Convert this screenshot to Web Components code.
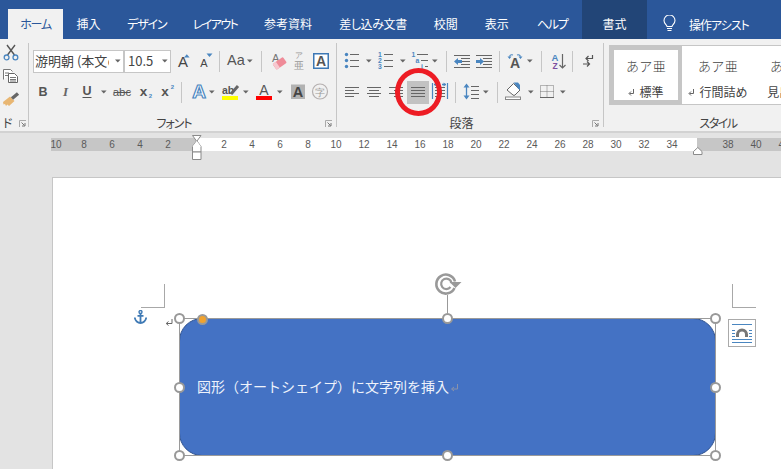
<!DOCTYPE html>
<html lang="ja"><head><meta charset="utf-8"><title>Word</title>
<style>
html,body{margin:0;padding:0;height:100%;overflow:hidden;background:#e3e3e3}
body{font-family:"Noto Sans CJK JP","Noto Sans",sans-serif}
</style></head><body>
<word-app>
  <word-tabs>
    <word-tab w="55" active left="8" ls="-1.2">ホーム</word-tab>
    <word-tab w="51">挿入</word-tab>
    <word-tab w="65.5" ls="-1.2">デザイン</word-tab>
    <word-tab w="71" ls="-1.6">レイアウト</word-tab>
    <word-tab w="75">参考資料</word-tab>
    <word-tab w="95" ls="-.4">差し込み文書</word-tab>
    <word-tab w="50.5">校閲</word-tab>
    <word-tab w="51.5">表示</word-tab>
    <word-tab w="59.5" ls="-1.2">ヘルプ</word-tab>
    <word-tab w="65" dark>書式</word-tab>
    <word-assist>操作アシスト</word-assist>
  </word-tabs>
  <word-ribbon>
    <ribbon-group w="28" label="ド" start launcher style="--pad:5px;--gap:3px">
      <rb-row h="20"><rb-icon n="scissors" w="16" h="20" m="-1"></rb-icon></rb-row>
      <rb-row h="20"><rb-icon n="copy" w="16" h="20" m="-1"></rb-icon></rb-row>
      <rb-row h="20"><rb-icon n="brush" w="16" h="20" m="-1"></rb-icon></rb-row>
    </ribbon-group>
    <rb-sep></rb-sep>
    <ribbon-group w="307" label="フォント" launcher style="--ls:-1px">
      <rb-row>
        <rb-combo w="91" tw="74" pad="1" cm="6">游明朝 (本文の</rb-combo>
        <rb-combo w="47" tw="31" pad="3" cm="3">10.5</rb-combo>
        <rb-icon n="grow" w="19" m="4"></rb-icon>
        <rb-icon n="shrink" w="18" m="2"></rb-icon>
        <rb-icon n="vs" w="1" m="5"></rb-icon>
        <rb-icon n="case" w="29" m="5"></rb-icon>
        <rb-icon n="vs" w="1" m="7"></rb-icon>
        <rb-icon n="eraser" w="22" m="5"></rb-icon>
        <rb-icon n="ruby" w="14" m="3"></rb-icon>
        <rb-icon n="boxa" w="18" m="6"></rb-icon>
      </rb-row>
      <rb-row>
        <rb-icon n="bold" w="16" m="2"></rb-icon>
        <rb-icon n="italic" w="15" m="7"></rb-icon>
        <rb-icon n="under" w="16" m="6"></rb-icon>
        <rb-icon n="caret" w="6" m="6"></rb-icon>
        <rb-icon n="strike" w="20" m="5"></rb-icon>
        <rb-icon n="sub" w="19" m="4"></rb-icon>
        <rb-icon n="sup" w="19" m="2"></rb-icon>
        <rb-icon n="vs" w="1" m="5"></rb-icon>
        <rb-icon n="glow" w="18" m="8"></rb-icon>
        <rb-icon n="caret" w="6" m="1"></rb-icon>
        <rb-icon n="mark" w="20" m="5"></rb-icon>
        <rb-icon n="caret" w="6" m="3"></rb-icon>
        <rb-icon n="red" w="20" m="5"></rb-icon>
        <rb-icon n="caret" w="6" m="3"></rb-icon>
        <rb-icon n="shade" w="16" m="7"></rb-icon>
        <rb-icon n="enclose" w="18" m="5"></rb-icon>
      </rb-row>
    </ribbon-group>
    <rb-sep></rb-sep>
    <ribbon-group w="266" label="段落" launcher>
      <rb-row>
        <rb-icon n="bullets" w="16" m="3"></rb-icon>
        <rb-icon n="caret" w="6" m="6"></rb-icon>
        <rb-icon n="numbers" w="17" m="5"></rb-icon>
        <rb-icon n="caret" w="6" m="6"></rb-icon>
        <rb-icon n="multi" w="17" m="5"></rb-icon>
        <rb-icon n="caret" w="6" m="4"></rb-icon>
        <rb-icon n="vs" w="1" m="8"></rb-icon>
        <rb-icon n="outdent" w="16" m="7"></rb-icon>
        <rb-icon n="indent" w="16" m="6"></rb-icon>
        <rb-icon n="vs" w="1" m="7"></rb-icon>
        <rb-icon n="direction" w="16" m="7"></rb-icon>
        <rb-icon n="caret" w="6" m="4"></rb-icon>
        <rb-icon n="vs" w="1" m="8"></rb-icon>
        <rb-icon n="sort" w="15" m="9"></rb-icon>
        <rb-icon n="vs" w="1" m="6"></rb-icon>
        <rb-icon n="pilcrow" w="10" m="10"></rb-icon>
      </rb-row>
      <rb-row>
        <rb-icon n="aleft" w="14" m="4"></rb-icon>
        <rb-icon n="acenter" w="14" m="8"></rb-icon>
        <rb-icon n="aright" w="14" m="8"></rb-icon>
        <rb-icon n="ajust" w="22" m="4"></rb-icon>
        <rb-icon n="adist" w="18" m="2"></rb-icon>
        <rb-icon n="vs" w="1" m="6"></rb-icon>
        <rb-icon n="spacing" w="15" m="8"></rb-icon>
        <rb-icon n="caret" w="6" m="4"></rb-icon>
        <rb-icon n="vs" w="1" m="8"></rb-icon>
        <rb-icon n="bucket" w="17" m="7"></rb-icon>
        <rb-icon n="caret" w="6" m="6"></rb-icon>
        <rb-icon n="borders" w="14" m="6"></rb-icon>
        <rb-icon n="caret" w="6" m="6"></rb-icon>
      </rb-row>
    </ribbon-group>
    <rb-sep></rb-sep>
    <ribbon-group w="245" label="スタイル" launcher style="--pad:6px;--ls:-1.5px">
      <style-gallery>
        <style-item selected label="標準" mark>あア亜</style-item>
        <style-item label="行間詰め" mark>あア亜</style-item>
        <style-item label="見出し 1">あア亜</style-item>
      </style-gallery>
    </ribbon-group>
  </word-ribbon>
  <word-canvas>
    <word-ruler></word-ruler>
    <doc-page>
      <crop-mark side="left"></crop-mark>
      <crop-mark side="right"></crop-mark>
      <anchor-mark></anchor-mark>
      <wp-shape>図形（オートシェイプ）に文字列を挿入</wp-shape>
      <layout-button></layout-button>
    </doc-page>
  </word-canvas>
  <red-ring></red-ring>
</word-app>
<script>
const G='#666',BL='#4a86c0';
const FONT='"Noto Sans CJK JP","Noto Sans",sans-serif';
const T=(x,y,s,size,o='')=>`<text x="${x}" y="${y}" font-size="${size}" ${o}>${s}</text>`;
const mid='text-anchor="middle"';
const hl=(x1,x2,y,c=G)=>`<path d="M${x1} ${y}H${x2}" stroke="${c}" fill="none"/>`;
const lines=(arr)=>arr.map(a=>hl(a[0],a[1],a[2])).join('');
const ICONS={
 vs:h=>`<path d="M.5 2V23" stroke="#c6c6c6"/>`,
 caret:()=>`<path d="M0 10.5h5.6l-2.8 3z" fill="${G}"/>`,
 scissors:()=>`<path d="M4 1l7.5 10M12 1L4.5 11" stroke="#555" stroke-width="1.4" fill="none"/><circle cx="3.6" cy="13.4" r="2.4" fill="none" stroke="${BL}" stroke-width="1.3"/><circle cx="12.4" cy="13.4" r="2.4" fill="none" stroke="${BL}" stroke-width="1.3"/>`,
 copy:()=>`<path d="M.5 12.5V2.5h7l2 2" fill="#fff" stroke="#777"/><path d="M2 6h4M2 8.500h3" stroke="#777"/><path d="M5.500 6.500h6l3 3v6h-9z" fill="#fff" stroke="#666"/><path d="M7 10.500h6M7 12.500h6M7 14h6" stroke="#777"/>`,
 brush:()=>`<path d="M0 12L7 6.500l4.500 4.500L6 16l-1.500-1.500L3 16l-1-2-1.500.5z" fill="#e8b672"/><path d="M9 8.500l6-5" stroke="#666" stroke-width="3.400"/>`,
 grow:()=>T(8,18,'A',15,`${mid} fill="#444"`)+`<path d="M9 8.5l2.8-3.2 2.8 3.2z" fill="${BL}"/>`,
 shrink:()=>T(8,18,'A',11,`${mid} fill="#444"`)+`<path d="M10.5 4.5h6l-3 3.4z" fill="${BL}"/>`,
 case:()=>T(2,16,'Aa',14.5,`fill="#555"`)+`<path d="M22 10.5h5.6l-2.8 3z" fill="${G}"/>`,
 eraser:()=>T(5,13,'A',11,`fill="#777"`)+`<g transform="rotate(-35 12.5 14.5)"><rect x="6.5" y="11" width="12.5" height="7" rx="1" fill="#ef8b98"/><rect x="6.5" y="11" width="4" height="7" fill="#f7c8cf"/></g>`,
 ruby:()=>T(7,9,'ア',7.5,`${mid} fill="#999" font-family='${FONT}'`)+T(7,20,'亜',10,`${mid} fill="#999" font-family='${FONT}'`),
 boxa:()=>`<rect x="1.75" y="4.75" width="14.5" height="14.5" fill="#fff" stroke="#3d78b5" stroke-width="1.5"/>`+T(9,17,'A',14,`${mid} font-weight="bold" fill="#555"`),
 bold:()=>T(8,16,'B',12.5,`${mid} font-weight="bold" fill="#555"`),
 italic:()=>T(7.5,16,'I',13,`${mid} font-style="italic" font-weight="bold" fill="#666" style="font-family:'Liberation Serif'"`),
 under:()=>T(8,15,'U',12.5,`${mid} font-weight="bold" fill="#555"`)+`<path d="M3.5 17.5h9" stroke="#555"/>`,
 strike:()=>T(10,15.5,'abc',11.5,`${mid} fill="#555"`)+`<path d="M1.5 12.5h17" stroke="#555"/>`,
 sub:()=>T(7.5,16,'x',13.5,`${mid} font-weight="bold" fill="#555"`)+T(14.5,18,'2',6,`${mid} font-weight="bold" fill="${BL}"`),
 sup:()=>T(8,16,'x',13.5,`${mid} font-weight="bold" fill="#555"`)+T(15.5,9,'2',6,`${mid} font-weight="bold" fill="${BL}"`),
 glow:()=>T(9,18,'A',19,`${mid} font-weight="bold" fill="#fff" stroke="${BL}" stroke-width="1.2"`),
 mark:()=>T(2,14,'ab',10.5,`fill="#555" font-weight="bold"`)+`<path d="M18 6l-7 8" stroke="#666" stroke-width="3"/><rect x="2" y="16" width="16" height="4" fill="#ffff00"/>`,
 red:()=>T(10,15,'A',14,`${mid} fill="#555"`)+`<rect x="2" y="16" width="16" height="4" fill="#ff0000"/>`,
 shade:()=>`<rect x="1" y="4.5" width="14" height="14.5" fill="#b2b2b2"/>`+T(8,17,'A',14.5,`${mid} font-weight="bold" fill="#444"`),
 enclose:()=>`<circle cx="9" cy="11.5" r="7.5" fill="none" stroke="#b5b0b0" stroke-width="1.2"/>`+T(9,15.5,'字',10,`${mid} fill="#999" font-family='${FONT}'`),
 bullets:()=>[5.5,11.5,17.5].map(y=>`<circle cx="2.5" cy="${y}" r="1.7" fill="${BL}"/>`+hl(6,15,y)).join(''),
 numbers:()=>[['1',5.5],['2',11.5],['3',17.5]].map(a=>T(3,a[1]+2.3,a[0],6.8,`${mid} font-weight="bold" fill="${BL}"`)+hl(7,16,a[1])).join(''),
 multi:()=>T(2.5,7.8,'1',6.8,`${mid} font-weight="bold" fill="${BL}"`)+hl(6,17,5.5)+T(6.5,13.8,'a',6.8,`${mid} font-weight="bold" fill="${BL}"`)+hl(10,17,11.5)+T(11,19.8,'i',6.8,`${mid} font-weight="bold" fill="${BL}"`)+hl(14,17,17.5),
 outdent:()=>lines([[0,16,6.5],[7,16,9.5],[7,16,12.5],[7,16,15.5],[0,16,18.5]])+`<path d="M0 12.5l4-3.6v2h4v3.2H4v2z" fill="${BL}"/>`,
 indent:()=>lines([[0,16,6.5],[7,16,9.5],[7,16,12.5],[7,16,15.5],[0,16,18.5]])+`<path d="M8 12.5L4 8.9v2H0v3.2h4v2z" fill="${BL}"/>`,
 direction:()=>T(8,19,'A',14,`${mid} font-weight="bold" fill="#555"`)+`<path d="M6 6C4.500 5.500 3 6 2.500 7.500M10 6c1.500-.5 3 0 3.500 1.500" fill="none" stroke="${BL}" stroke-width="1.1"/><path d="M.5 7.500h4L2.500 10zM15.500 7.500h-4l2 2.500z" fill="${BL}"/>`,
 sort:()=>T(4,12,'A',9.5,`${mid} font-weight="bold" fill="${BL}"`)+T(4,20,'Z',8.5,`${mid} font-weight="bold" fill="#7b4fa0"`)+`<path d="M11.5 5v14M8.5 16l3 3 3-3" fill="none" stroke="#666" stroke-width="1.2"/>`,
 pilcrow:()=>`<path d="M9.5 6v3.5H3M5.5 7L3 9.5 5.5 12" fill="none" stroke="#555" stroke-width="1.2"/><path d="M0 15h6M4 12.5L6.5 15 4 17.5" fill="none" stroke="#555" stroke-width="1.2"/>`,
 aleft:()=>lines([[0,14,7.5],[0,9,10.5],[0,14,13.5],[0,9,16.5]]),
 acenter:()=>lines([[0,14,7.5],[2,12,10.5],[0,14,13.5],[2,12,16.5]]),
 aright:()=>lines([[0,14,7.5],[5,14,10.5],[0,14,13.5],[5,14,16.5]]),
 ajust:()=>`<rect x="0" y="1" width="22" height="23" fill="#c2c2c2"/>`+lines([[4,18,7.5],[4,18,10.5],[4,18,13.5],[4,18,16.5]]),
 adist:()=>`<path d="M1.5 3v16M16.5 3v16" stroke="${BL}" stroke-width="1.2"/>`+lines([[4,14,7.5],[4,14,10.5],[4,14,13.5],[4,14,16.5]])+`<path d="M3 4.5h4M15 4.5h-4" stroke="${BL}" stroke-width="1.3"/><path d="M3 4.5l2.4-2v4zM15 4.5l-2.4-2v4z" fill="${BL}"/>`,
 spacing:()=>`<path d="M2.5 5v13" stroke="${BL}" stroke-width="1.3"/><path d="M2.5 3.5L5.5 7.5h-6zM2.5 19.5l3-4h-6z" fill="${BL}"/>`+lines([[7,15,6.5],[7,15,10.5],[7,15,14.5],[7,15,18.5]]),
 bucket:()=>`<path d="M2 10l6.500-6.500L15 10l-5 5a1.500 1.500 0 0 1-2 0z" fill="#fff" stroke="#666"/><path d="M8.500 2.500h4.500l2 2.500v5l-2-1.500-2-3z" fill="${BL}"/><rect x=".5" y="17" width="15" height="2.500" fill="#fff" stroke="#888"/>`,
 borders:()=>`<path d="M.5 5.5h13v12H.5zM.5 11.5h13M7 5.5v12" fill="none" stroke="#777" stroke-dasharray="1 1"/><path d="M0 17.5h14" stroke="#666"/>`
};

function def(name,css,html){
  customElements.define(name,class extends HTMLElement{
    constructor(){super();this.attachShadow({mode:'open'});}
    connectedCallback(){
      this.shadowRoot.innerHTML=`<style>${css}</style>`+(typeof html==='function'?html(this):html);
    }
  });
}

def('word-app',`:host{display:flex;flex-direction:column;position:relative;width:781px;height:469px;overflow:hidden;background:#e3e3e3;font-family:${FONT}}`,`<slot></slot>`);

def('word-tabs',`:host{display:flex;height:39px;background:#2b579a;flex:none}`,`<slot></slot>`);

def('word-tab',`:host{display:block;flex:none;align-self:flex-end;height:30px;line-height:30px;text-align:center;color:#fff;font-size:12px;font-feature-settings:"palt";white-space:nowrap}
:host([active]){background:#f1f1f1;color:#2b579a}
:host([dark]){background:#224577;height:39px;line-height:48px}`,
 el=>{el.style.width=el.getAttribute('w')+'px';if(el.hasAttribute('left'))el.style.marginLeft=el.getAttribute('left')+'px';if(el.hasAttribute('ls'))el.style.letterSpacing=el.getAttribute('ls')+'px';return `<slot></slot>`;});

def('word-assist',`:host{display:flex;align-items:center;flex:none;margin-left:16px;color:#fff;font-size:12px;font-feature-settings:"palt";letter-spacing:-1px;white-space:nowrap;gap:13px;padding-top:9px;height:30px}
svg{display:block;margin-top:-1px}`,
 `<svg width="13" height="17" viewBox="0 0 13 17"><path d="M4 11.5C3.6 9.5 1 8.6 1 5.5a5.5 5.5 0 0 1 11 0c0 3.1-2.6 4-3 6z" fill="none" stroke="#fff" stroke-width="1.1"/><path d="M4 13.5h5M4.5 15.5h4" stroke="#fff" stroke-width="1.1"/></svg><slot></slot>`);

def('word-ribbon',`:host{display:flex;flex:none;height:92px;background:#f1f1f1;border-bottom:2px solid #d2d2d2;overflow:hidden}`,`<slot></slot>`);

def('rb-sep',`:host{display:block;flex:none;width:1px;margin:4px 0;background:#c6c6c6}`,``);

def('ribbon-group',`:host{display:flex;flex-direction:column;flex:none;height:92px;color:#444}
.body{flex:1;display:flex;flex-direction:column;gap:var(--gap,7px);padding:var(--pad,10px) 0 0 4px;min-height:0}
.foot{display:flex;align-items:center;height:16px;flex:none;font-size:12px;line-height:16px;font-feature-settings:"palt"}
.lab{flex:1;text-align:center;white-space:nowrap;letter-spacing:var(--ls,0)}
.lab.start{text-align:left;padding-left:3px}
svg{display:block;margin:0 4px 0 6px;flex:none}`,
 el=>{
  el.style.width=el.getAttribute('w')+'px';
  const start=el.hasAttribute('start');
  return `<div class="body"><slot></slot></div><div class="foot"><span class="lab ${start?'start':''}">${el.getAttribute('label')}</span><svg width="7" height="7" viewBox="0 0 7 7"><path d="M.5 7V.5H7" fill="none" stroke="#aaa"/><path d="M2.5 2.5l3 3M6 3v3H3" fill="none" stroke="#777"/></svg></div>`;
 });

def('rb-row',`:host{display:flex;align-items:center;flex:none;height:24px}`,
 el=>{if(el.hasAttribute('h'))el.style.height=el.getAttribute('h')+'px';return `<slot></slot>`;});

def('rb-icon',`:host{display:block;flex:none}
svg{display:block;overflow:visible}
text{font-family:"Liberation Sans",Arial,sans-serif}`,
 el=>{
  const w=+el.getAttribute('w'),h=+(el.getAttribute('h')||24);
  el.style.width=w+'px';el.style.height=h+'px';el.style.marginLeft=(el.getAttribute('m')||0)+'px';
  return `<svg width="${w}" height="${h}" viewBox="0 0 ${w} ${h}">${ICONS[el.getAttribute('n')]()}</svg>`;
 });

def('rb-combo',`:host{display:flex;align-items:center;flex:none;box-sizing:border-box;height:23px;background:#fff;border:1.5px solid #c6c6c6;color:#444;font-size:13px}
.t{display:block;overflow:hidden;white-space:nowrap;line-height:20px;flex:none}
svg{display:block;flex:none}`,
 el=>{
  el.style.width=el.getAttribute('w')+'px';
  return `<span class="t" style="width:${el.getAttribute('tw')}px;margin-left:${el.getAttribute('pad')}px"><slot></slot></span><svg style="margin-left:${el.getAttribute('cm')}px" width="6" height="4" viewBox="0 0 6 4"><path d="M0 .5h5.6L2.8 3.6z" fill="${G}"/></svg>`;
 });

def('style-gallery',`:host{display:flex;box-sizing:border-box;margin-left:1px;width:240px;height:60px;background:#fff;border:1px solid #c6c6c6;border-right:0}`,`<slot></slot>`);

def('style-item',`:host{display:flex;flex-direction:column;align-items:center;flex:none;box-sizing:border-box;width:72px;height:58px;border:4px solid transparent;padding-top:6px;color:#444}
:host([selected]){border-color:#c6c6c6}
.s{font-size:13px;font-weight:300;line-height:20px;letter-spacing:.4px;white-space:nowrap}
.l{margin-top:6px;font-size:12px;line-height:20px;display:flex;align-items:center;gap:5px;white-space:nowrap}
svg{display:block}`,
 el=>`<span class="s"><slot></slot></span><span class="l">${el.hasAttribute('mark')?`<svg width="6" height="7" viewBox="0 0 6 7"><path d="M5.5 0v4.5H1.5M3 2.5L1 4.5l2 2" fill="none" stroke="#666"/></svg>`:''}${el.getAttribute('label')}</span>`);

def('word-canvas',`:host{display:flex;flex-direction:column;flex:1;min-height:0;padding:5px 0 0 51px;background:#e3e3e3}`,`<slot></slot>`);

const nums=[10,8,6,4,2,'',2,4,6,8,10,12,14,16,18,20,22,24,26,28,30,32,34,'',38,40,42];
def('word-ruler',`:host{display:block;position:relative;flex:none;height:13px}
.strip{display:flex;height:13px;overflow:hidden;background:linear-gradient(90deg,#c6c6c6 0 145px,#fff 145px 646px,#c6c6c6 646px);font:10px/13px "Liberation Sans",Arial,sans-serif;color:#5a5a5a}
.strip span{flex:none;width:28px;text-align:center}
.strip span:first-child{margin-left:-9px}
svg{position:absolute;display:block;overflow:visible}`,
 `<div class="strip">${nums.map(n=>`<span>${n}</span>`).join('')}</div>
 <svg style="left:141px;top:-3px" width="10" height="25" viewBox="0 0 10 25"><path d="M.5.5h8.5L5 6 9 11.5V17H.5v-5.5L4.5 6z" fill="#fff" stroke="#8a8a8a"/><path d="M.5 17h8.500v7.500H.5z" fill="#fff" stroke="#8a8a8a"/><path d="M.5 11.500L4.700 6 9 11.500z" fill="#fff" stroke="none"/></svg>
 <svg style="left:642px;top:9px" width="10" height="8" viewBox="0 0 10 8"><path d="M.5 7.500V4.500L4.800.5 9 4.500v3z" fill="#fff" stroke="#8a8a8a"/></svg>`);

def('doc-page',`:host{display:block;position:relative;flex:1;margin:26px 0 0 1px;background:#fff;border-top:1px solid #c6c6c6;border-left:1px solid #c6c6c6;min-height:0}`,`<slot></slot>`);

def('crop-mark',`:host{display:block;position:absolute;top:106px;width:24px;height:24px;box-sizing:border-box;border:0 solid #a8a8a8;border-bottom-width:1px}
:host([side=left]){left:88px;border-right-width:1px}
:host([side=right]){left:679px;border-left-width:1px}`,``);

def('anchor-mark',`:host{display:block;position:absolute;left:81px;top:132px;width:13px;height:14px}
svg{display:block}`,
 `<svg width="13" height="14" viewBox="0 0 13 14"><circle cx="6.500" cy="2" r="1.500" fill="none" stroke="#3f7ab5" stroke-width="1.400"/><path d="M6.500 3.500V13M3.500 5.800h6M.8 7.500c.3 3.300 3 5.500 5.700 5.500s5.400-2.200 5.700-5.500" fill="none" stroke="#3f7ab5" stroke-width="1.800"/></svg>`);

def('layout-button',`:host{display:block;position:absolute;left:675px;top:141px;width:28px;height:28px;box-sizing:border-box;background:#fff;border:1px solid #aaa}
svg{display:block}`,
 `<svg width="26" height="26" viewBox="0 0 26 26"><path d="M3 4.500h20M3 19.500h20M3 22.500h20" stroke="#4a86c0"/><path d="M3 10.500h3M20 10.500h3M3 13.500h3M20 13.500h3M3 16.500h3M20 16.500h3" stroke="#4a86c0"/><path d="M8.500 17v-2.500a4.500 4.500 0 0 1 9 0V17" fill="none" stroke="#777" stroke-width="3"/></svg>`);

const H=(x,y)=>`<i class="h" style="left:${x};top:${y}"></i>`;
def('wp-shape',`:host{display:block;position:absolute;left:126px;top:140px;width:537px;height:138px}
.fill{position:absolute;inset:0;box-sizing:border-box;background:#4472c4;border-radius:23px;border:1px solid #2f528f;display:flex;align-items:center;padding:0 0 2px 17px;color:#eef2fb;font-size:14px;white-space:nowrap}
.frame{position:absolute;inset:0;border:1px solid #9a9a9a;box-sizing:border-box;pointer-events:none}
.h{position:absolute;box-sizing:border-box;width:11px;height:11px;margin:-5.500px 0 0 -5.500px;border-radius:50%;background:#fff;border:2px solid #999}
.o{background:#f0a22e;margin-top:-4.500px}
.stem{position:absolute;left:268px;top:-23px;width:1px;height:18px;background:#999}
svg.rot{position:absolute;left:257px;top:-45px;display:block;overflow:visible}
svg.ret{display:block;margin:3px 0 0 1px;flex:none}
svg.ret2{position:absolute;left:-14px;top:1px;display:block}`,
 `<div class="fill"><slot></slot><svg class="ret" width="8" height="8" viewBox="0 0 8 8"><path d="M7.500 0v5H2M4 3L1.500 5 4 7" fill="none" stroke="#8a93aa"/></svg></div>
 <div class="frame"></div>
 <svg class="ret2" width="8" height="8" viewBox="0 0 8 8"><path d="M7 0v4.500H1.500M3.500 2.500L1.200 4.500l2.300 2" fill="none" stroke="#666"/></svg>
 <div class="stem"></div>
 <svg class="rot" width="26" height="22" viewBox="0 0 26 22"><path d="M19 8.500A9.500 9.500 0 1 0 18.500 15" fill="none" stroke="#999" stroke-width="2.600"/><path d="M15.500 10A5.200 5.200 0 1 0 14.500 14" fill="none" stroke="#999" stroke-width="2.200"/><path d="M13.500 9h12l-6 6z" fill="#999"/></svg>
 ${H('.5px','.5px')}${H('23.500px','.5px').replace('class="h"','class="h o"')}${H('268.500px','.5px')}${H('536.500px','.5px')}${H('.5px','69.500px')}${H('536.500px','69.500px')}${H('.5px','137.500px')}${H('268.500px','137.500px')}${H('536.500px','137.500px')}`);

def('red-ring',`:host{display:block;position:absolute;left:395px;top:68px;width:47px;height:48px;box-sizing:border-box;border:5px solid #ed1c24;border-radius:50%;pointer-events:none}`,``);
</script>
</body></html>
